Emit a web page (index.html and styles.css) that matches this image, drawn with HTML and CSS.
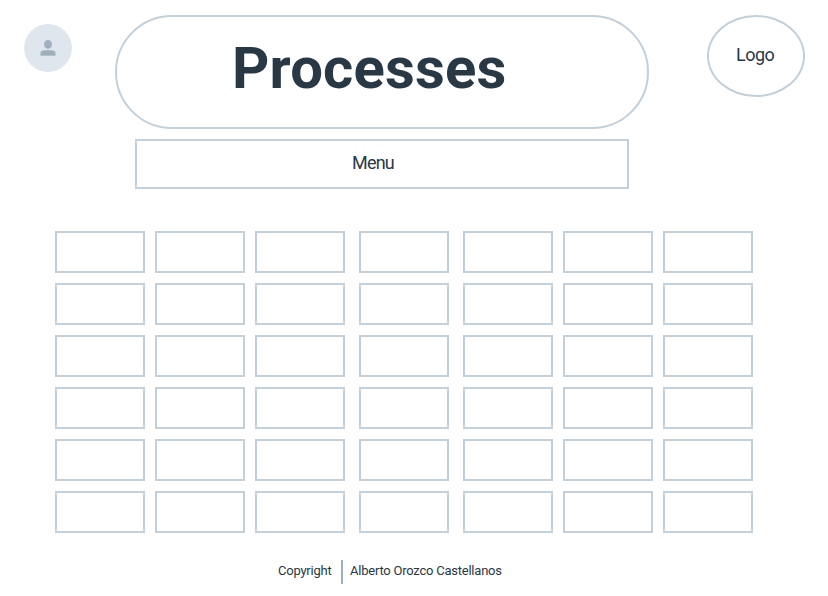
FILE: index.html
```
<!DOCTYPE html>
<html lang="en">
<head>
<meta charset="utf-8">
<title>Processes</title>
<link rel="stylesheet" href="styles.css">
</head>
<body>
<header class="header">
  <div class="avatar">
    <svg width="16" height="16" viewBox="0 0 16 16" fill="#9fb0bd" aria-hidden="true">
      <ellipse cx="8" cy="4.400" rx="4" ry="4.400"/>
      <path d="M.5 15.800v-2.600C.5 11 3 10.200 5 10.200h6c2 0 4.500.8 4.500 3v2.600z"/>
    </svg>
  </div>
  <h1 class="title"><span>Processes</span></h1>
  <div class="logo"><span>Logo</span></div>
</header>
<nav class="menu"><span>Menu</span></nav>
<main class="grid">
  <div class="cell"></div><div class="cell"></div><div class="cell"></div><div class="cell"></div><div class="cell"></div><div class="cell"></div><div class="cell"></div>
  <div class="cell"></div><div class="cell"></div><div class="cell"></div><div class="cell"></div><div class="cell"></div><div class="cell"></div><div class="cell"></div>
  <div class="cell"></div><div class="cell"></div><div class="cell"></div><div class="cell"></div><div class="cell"></div><div class="cell"></div><div class="cell"></div>
  <div class="cell"></div><div class="cell"></div><div class="cell"></div><div class="cell"></div><div class="cell"></div><div class="cell"></div><div class="cell"></div>
  <div class="cell"></div><div class="cell"></div><div class="cell"></div><div class="cell"></div><div class="cell"></div><div class="cell"></div><div class="cell"></div>
  <div class="cell"></div><div class="cell"></div><div class="cell"></div><div class="cell"></div><div class="cell"></div><div class="cell"></div><div class="cell"></div>
</main>
<footer class="footer">
  <span class="copyright">Copyright</span>
  <span class="author">Alberto Orozco Castellanos</span>
</footer>
</body>
</html>
```
FILE: styles.css
```
* { box-sizing: border-box; }

body {
  margin: 0;
  width: 828px;
  height: 596px;
  overflow: hidden;
  background: #fff;
  color: #293845;
  font-family: Roboto, "Liberation Sans", sans-serif;
  font-size: 18px;
}

.header {
  display: flex;
  align-items: flex-start;
  padding: 15px 23px 0 24px;
}

.avatar {
  display: flex;
  align-items: center;
  justify-content: center;
  width: 48px;
  height: 48px;
  margin-top: 9px;
  border-radius: 50%;
  background: #dfe6ee;
}

.title {
  width: 534px;
  height: 114px;
  margin: 0 0 0 43px;
  padding-left: 115px;
  border: 2px solid #c3cfd9;
  border-radius: 57px;
  font-size: 58px;
  font-weight: 700;
  letter-spacing: 0.2px;
  line-height: 102px;
}

.logo {
  width: 98px;
  height: 82px;
  margin-left: auto;
  padding-left: 27px;
  border: 2px solid #c3cfd9;
  border-radius: 50%;
  letter-spacing: -0.5px;
  line-height: 76px;
}

.menu {
  width: 494px;
  height: 50px;
  margin: 10px 0 0 135px;
  padding-left: 215px;
  border: 2px solid #c3cfd9;
  letter-spacing: -0.8px;
  line-height: 44px;
}

.grid {
  display: grid;
  grid-template-columns: 100px 100px 104px 104px 100px 100px 90px;
  grid-auto-rows: 42px;
  row-gap: 10px;
  margin: 42px 0 0 55px;
}

.cell {
  width: 90px;
  border: 2px solid #c3cfd9;
}

.footer {
  display: flex;
  height: 24px;
  margin: 27px 0 0 278px;
  font-size: 13px;
  letter-spacing: -0.23px;
  line-height: 22px;
  white-space: nowrap;
}

.copyright {
  width: 65px;
  border-right: 2px solid #9fb0bd;
}

.author { margin-left: 7px; }
```
